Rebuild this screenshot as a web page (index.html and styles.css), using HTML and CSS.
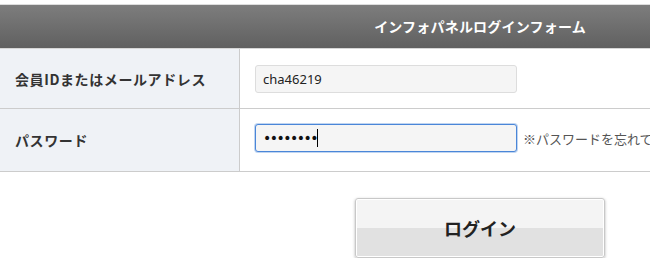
FILE: index.html
```html
<!DOCTYPE html>
<html lang="ja">
<head>
    <meta charset="UTF-8">
    <meta name="viewport" content="width=device-width, initial-scale=1.0">
    <title>インフォパネルログイン</title>
    <link rel="stylesheet" href="styles.css">
</head>
<body>
    <form class="login-form" onsubmit="return false;">
        <!-- Title -->
        <div class="form-title">インフォパネルログインフォーム</div>

        <!-- ID row -->
        <div class="form-row">
            <div class="form-label">会員IDまたはメールアドレス</div>
            <div class="form-field">
                <input type="text" class="text-input" value="cha46219">
            </div>
        </div>

        <!-- Password row -->
        <div class="form-row form-row-pass">
            <div class="form-label">パスワード</div>
            <div class="form-field">
                <span class="input-wrap has-caret">
                    <input type="password" class="text-input pass-input is-focused" value="abcdefgh">
                </span>
                <a href="#" class="forgot-link">※パスワードを忘れてしまった方はこちら</a>
            </div>
        </div>

        <!-- Submit -->
        <div class="form-actions">
            <button type="submit" class="login-button">ログイン</button>
        </div>
    </form>
</body>
</html>
```

FILE: styles.css
```css
/* Basic Reset */
* {
    margin: 0;
    padding: 0;
    box-sizing: border-box;
}

body {
    font-family: "Noto Sans", "Noto Sans CJK JP", sans-serif;
    background-color: #fff;
    color: #333;
    overflow: hidden;
}

.login-form {
    width: 960px;
    margin-top: 4px;
    border-top: 1px solid #ddd;
}

.form-title {
    height: 44px;
    line-height: 43px;
    text-align: center;
    font-family: "Noto Sans CJK JP", sans-serif;
    font-size: 14px;
    font-weight: bold;
    letter-spacing: 0.2px;
    color: #fff;
    background: linear-gradient(#7d7d7d, #606060);
    border-bottom: 1px solid #d6d6d6;
}

.form-row {
    display: flex;
    border-bottom: 1px solid #ccc;
}

.form-label {
    width: 240px;
    flex-shrink: 0;
    display: flex;
    align-items: center;
    padding-left: 15px;
    background-color: #eff2f6;
    border-right: 1px solid #ccc;
    font-family: "Noto Sans CJK JP", sans-serif;
    font-size: 14px;
    font-weight: bold;
    letter-spacing: 0.6px;
    color: #333;
}

.form-field {
    flex: 1;
    display: flex;
    align-items: center;
    padding: 16px 15px 15px;
}

.form-row-pass .form-field {
    padding: 15px 15px 19px;
}

.input-wrap {
    position: relative;
    display: block;
}

.text-input {
    display: block;
    width: 262px;
    height: 28px;
    padding: 0 7px;
    border: 1px solid #ddd;
    border-radius: 3px;
    background-color: #f5f5f5;
    font-family: "Noto Sans", sans-serif;
    font-size: 13px;
    color: #222;
    outline: none;
}

.pass-input {
    font-family: "DejaVu Sans", sans-serif;
    font-size: 14px;
    letter-spacing: -1.5px;
    color: #111;
}

.text-input.is-focused {
    border-color: #4a86d8;
    box-shadow: 0 0 0 1px rgba(74, 134, 216, 0.35);
}

/* text caret after the password dots */
.has-caret::after {
    content: "";
    position: absolute;
    left: 62px;
    top: 5px;
    width: 1px;
    height: 18px;
    background-color: #000;
}

.forgot-link {
    margin-left: 6px;
    white-space: nowrap;
    font-family: "Noto Sans CJK JP", sans-serif;
    font-size: 13px;
    color: #555;
    text-decoration: none;
}

.form-actions {
    padding-top: 26px;
    text-align: center;
}

.login-button {
    width: 250px;
    height: 60px;
    border: 1px solid #c8c8c8;
    border-radius: 3px;
    background: linear-gradient(#f4f4f4 50%, #e1e1e1 50%);
    box-shadow: inset 0 0 0 1px #fff, 0 1px 3px rgba(0, 0, 0, 0.3);
    font-family: "Noto Sans CJK JP", sans-serif;
    font-size: 18px;
    font-weight: bold;
    color: #222;
    cursor: pointer;
}
```
